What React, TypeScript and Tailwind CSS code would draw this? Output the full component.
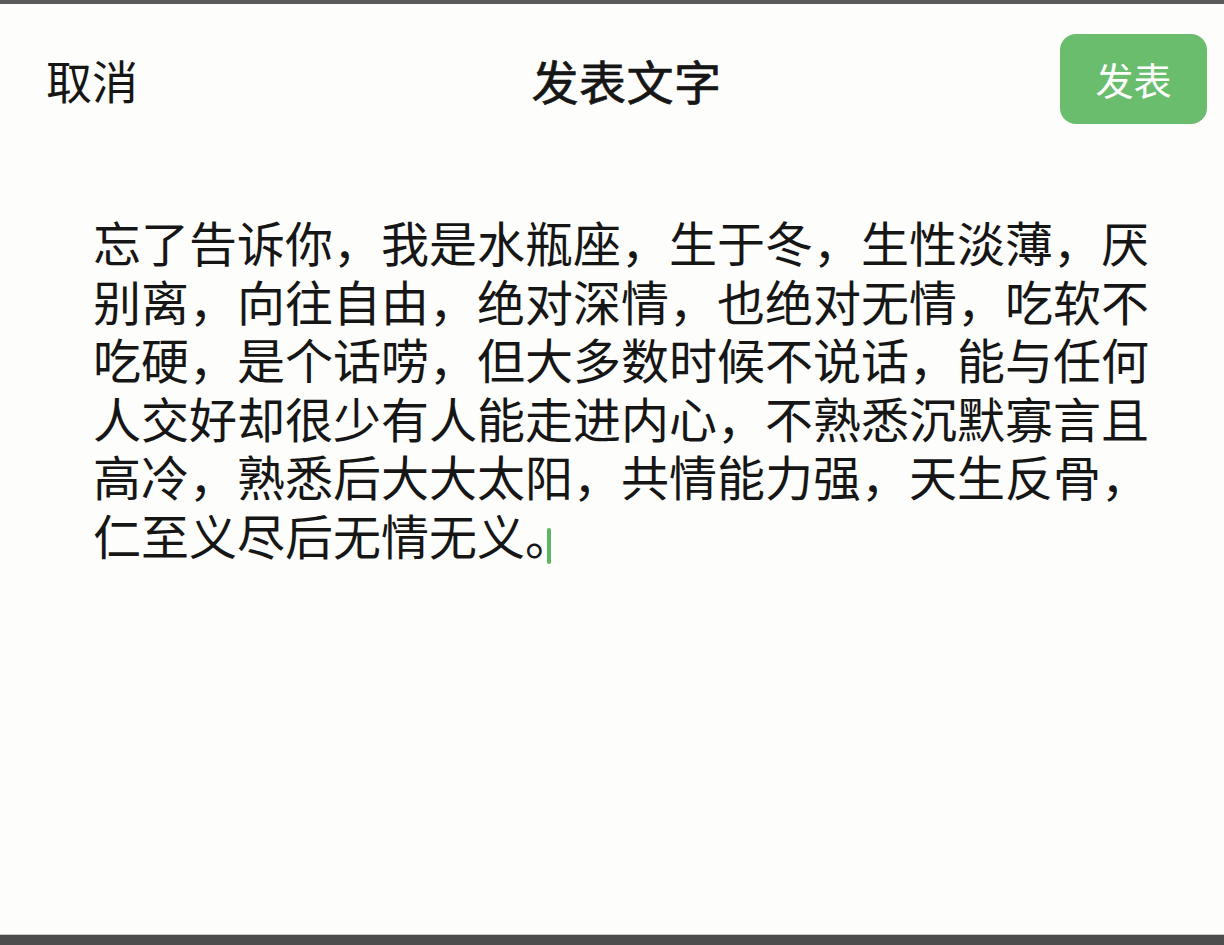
const body =
  '忘了告诉你，我是水瓶座，生于冬，生性淡薄，厌别离，向往自由，绝对深情，也绝对无情，吃软不吃硬，是个话唠，但大多数时候不说话，能与任何人交好却很少有人能走进内心，不熟悉沉默寡言且高冷，熟悉后大大太阳，共情能力强，天生反骨，仁至义尽后无情无义。';

export default function App() {
  return (
    <div
      className="flex h-[945px] w-[1224px] flex-col overflow-hidden border-t-4 border-[#5b5b5b] bg-[#fdfdfb] text-[#161616]"
      style={{ fontFamily: '"Noto Sans CJK SC", "Noto Sans", sans-serif' }}
    >
      <header className="mt-[30px] grid h-[90px] grid-cols-[1fr_auto_1fr] items-center pl-[46px] pr-[17px]">
        <button className="justify-self-start text-[46px] leading-none">取消</button>
        <h1 className="text-[47px] font-normal leading-none tracking-[0.5px] [-webkit-text-stroke:0.7px_#161616]">
          发表文字
        </h1>
        <button className="h-[90px] w-[147px] justify-self-end rounded-[16px] bg-[#6bbd6e] text-[38px] leading-none text-white">
          发表
        </button>
      </header>

      <main className="flex-1 pl-[93px] pt-[88px]">
        <p className="w-[1070px] text-[48px] leading-[58.6px]">
          {body}
          <span className="ml-[-26px] inline-block h-[36px] w-[4px] translate-y-[9px] rounded-full bg-[#5cb860] align-baseline" />
        </p>
      </main>

      <div className="h-[11px] border-t border-[#c9c9c9] bg-[#4d4d4d]" />
    </div>
  );
}
